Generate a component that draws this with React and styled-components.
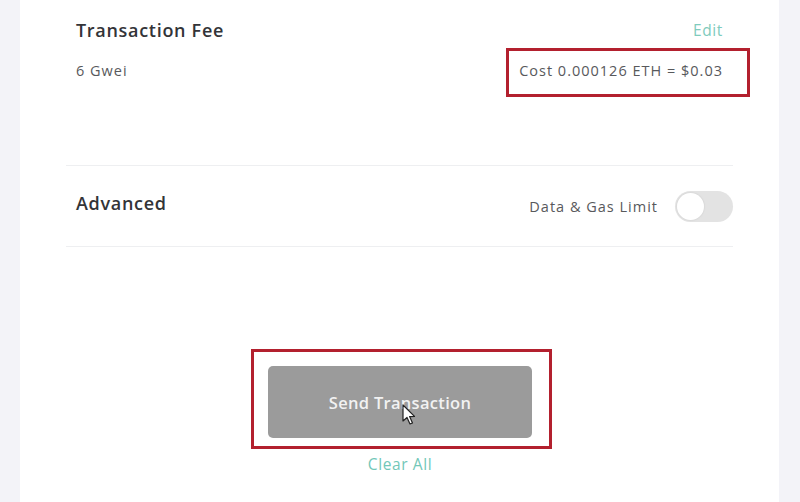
import React from "react";
import styled, { createGlobalStyle } from "styled-components";

const GlobalStyle = createGlobalStyle`
  html, body {
    margin: 0;
    padding: 0;
    background: #f3f3f7;
  }
  body {
    font-family: "Open Sans", "Liberation Sans", sans-serif;
  }
`;

const Page = styled.div`
  display: flex;
  width: 800px;
  height: 502px;
  overflow: hidden;
  background: #f3f3f7;
`;

const SideStrip = styled.div`
  width: ${({ w }) => w}px;
  flex-shrink: 0;
  background: #f3f3f8;
`;

const Card = styled.div`
  flex: 1;
  background: #ffffff;
  padding: 0 46px;
  display: flex;
  flex-direction: column;
`;

const FeeSection = styled.div`
  padding: 10px 10px 0;
  display: flex;
  flex-direction: column;
`;

const Row = styled.div`
  display: flex;
  align-items: center;
  justify-content: space-between;
  height: ${({ h }) => h}px;
`;

const Title = styled.div`
  font-size: 18px;
  font-weight: 600;
  color: #333438;
  letter-spacing: 0.7px;
`;

const Muted = styled.span`
  font-size: 14.5px;
  color: #58595c;
  letter-spacing: 1px;
  position: relative;
`;

const LinkText = styled.span`
  font-size: 15.5px;
  color: ${({ tone }) => tone || "#72c7b8"};
  letter-spacing: 0.6px;
  cursor: pointer;
`;

const Highlight = styled.span`
  position: absolute;
  left: ${({ l }) => l}px;
  right: ${({ r }) => r}px;
  top: ${({ t }) => t}px;
  bottom: ${({ b }) => b}px;
  border: 3px solid #b3202e;
  pointer-events: none;
`;

const Divider = styled.div`
  height: 1px;
  background: #eeeff1;
  margin-top: ${({ mt }) => mt || 0}px;
`;

const AdvancedRow = styled(Row)`
  padding: 0 0 6px 10px;
  box-sizing: border-box;
`;

const ToggleGroup = styled.div`
  display: flex;
  align-items: center;
  gap: 17px;
  margin-bottom: -6px;
`;

const Track = styled.div`
  width: 58px;
  height: 31px;
  border-radius: 16px;
  background: #e3e3e3;
  position: relative;
`;

const Knob = styled.div`
  position: absolute;
  left: 2px;
  top: 2px;
  width: 27px;
  height: 27px;
  border-radius: 50%;
  background: #ffffff;
  box-shadow: 0 0 1px 1px #dadada;
`;

const ActionArea = styled.div`
  display: flex;
  flex-direction: column;
  align-items: center;
  padding-top: 119px;
  margin-left: 1px;
`;

const ButtonWrap = styled.div`
  position: relative;
`;

const SendButton = styled.button`
  width: 264px;
  height: 72px;
  border: none;
  border-radius: 5px;
  background: #9b9b9b;
  color: #f2f2f2;
  font-family: inherit;
  font-size: 16.5px;
  font-weight: 600;
  letter-spacing: 0.3px;
  padding: 0;
`;

const Cursor = styled.svg`
  position: absolute;
  left: 134px;
  top: 38px;
`;

const ClearRow = styled.div`
  margin-top: 16px;
  line-height: 20px;
`;

export default function App() {
  return (
    <>
      <GlobalStyle />
      <Page>
        <SideStrip w={20} />
        <Card>
          <FeeSection>
            <Row h={40}>
              <Title>Transaction Fee</Title>
              <LinkText tone="#7fcbbd">Edit</LinkText>
            </Row>
            <Row h={40}>
              <Muted>6 Gwei</Muted>
              <Muted>
                Cost 0.000126 ETH = $0.03
                <Highlight l={-13} r={-27} t={-13} b={-17} />
              </Muted>
            </Row>
          </FeeSection>
          <Divider mt={75} />
          <AdvancedRow h={80}>
            <Title>Advanced</Title>
            <ToggleGroup>
              <Muted>Data &amp; Gas Limit</Muted>
              <Track>
                <Knob />
              </Track>
            </ToggleGroup>
          </AdvancedRow>
          <Divider />
          <ActionArea>
            <ButtonWrap>
              <SendButton>Send Transaction</SendButton>
              <Highlight l={-17} r={-20} t={-17} b={-11} />
              <Cursor width="14" height="22" viewBox="0 0 14 22">
                <path
                  d="M1 1 L1 17 L5 13.5 L8 20 L10.5 19 L7.6 12.6 L12.5 12.4 Z"
                  fill="#ffffff"
                  stroke="#222"
                  strokeWidth="1.2"
                  strokeLinejoin="round"
                />
              </Cursor>
            </ButtonWrap>
            <ClearRow>
              <LinkText>Clear All</LinkText>
            </ClearRow>
          </ActionArea>
        </Card>
        <SideStrip w={21} />
      </Page>
    </>
  );
}
